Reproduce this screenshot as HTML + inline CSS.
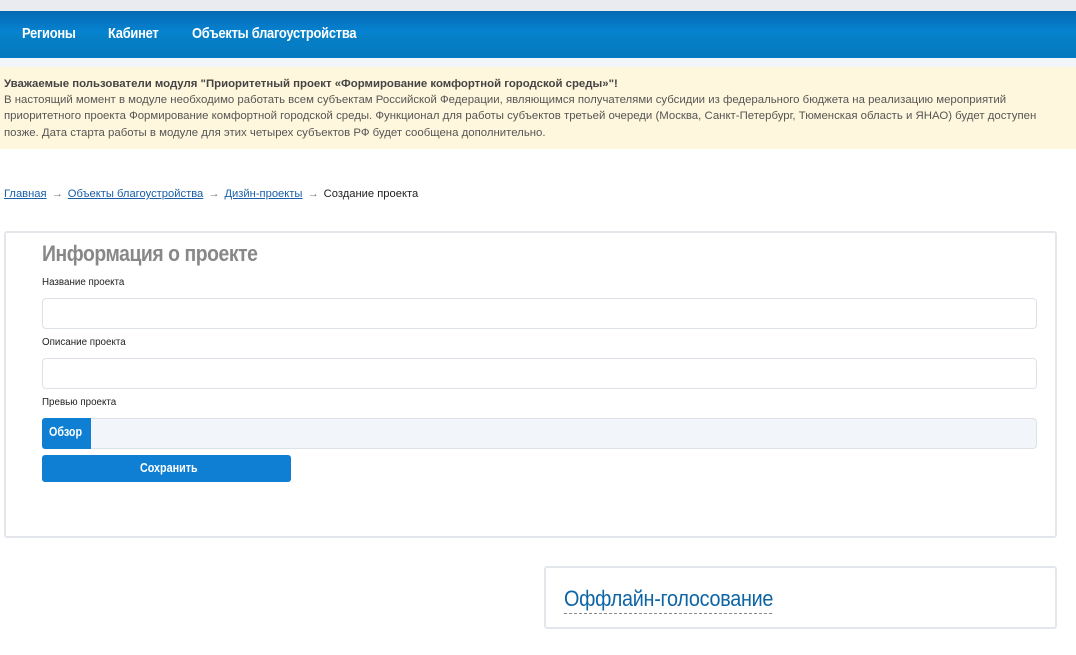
<!DOCTYPE html>
<html><head><meta charset="utf-8"><style>
*{margin:0;padding:0;box-sizing:border-box}
body{width:1076px;height:655px;overflow:hidden;background:#fff;font-family:"Liberation Sans",sans-serif;position:relative}
.sx{display:inline-block;transform:scaleX(0.86);transform-origin:0 0;white-space:nowrap}
.top{position:absolute;left:0;top:0;width:1076px;height:11px;background:#e9ebf0}
.nav{position:absolute;left:0;top:11px;width:1076px;height:47px;background:linear-gradient(#0569b3 0,#0684d2 22px,#0680c8 24px,#0679c0 47px)}
.nav span{position:absolute;top:14px;color:#fff;font-size:15px;font-weight:bold;letter-spacing:-0.3px}
.gap{position:absolute;left:0;top:58px;width:1076px;height:9px;background:#f2f5f9}
.notice{position:absolute;left:0;top:67px;width:1076px;height:82px;background:#fff7dd;padding:9px 4px;font-size:11.4px;line-height:16.2px;color:#555}
.notice b{color:#444}
.bc{position:absolute;left:4px;top:188px;font-size:11.2px;color:#222;white-space:nowrap}
.bc a{color:#1a5fa8;text-decoration:underline}
.bc .ar{color:#777;margin:0 5px}
.card{position:absolute;border:2px solid #e3e7ec;border-radius:3px;background:#fff}
.h{position:absolute;font-size:22px;color:#888;font-weight:bold;letter-spacing:-0.5px}
.lbl{position:absolute;left:42px;font-size:9.8px;color:#222}
.inp{position:absolute;left:42px;width:995px;height:31px;border:1px solid #dde2e8;border-radius:4px;background:#fff}
</style></head><body>
<div class="top"></div>
<div class="nav"><span style="left:22px" class="sx">Регионы</span><span style="left:108px" class="sx">Кабинет</span><span style="left:192px" class="sx">Объекты благоустройства</span></div>
<div class="gap"></div>
<div class="notice"><b>Уважаемые пользователи модуля "Приоритетный проект «Формирование комфортной городской среды»"!</b><br>В настоящий момент в модуле необходимо работать всем субъектам Российской Федерации, являющимся получателями субсидии из федерального бюджета на реализацию мероприятий<br>приоритетного проекта Формирование комфортной городской среды. Функционал для работы субъектов третьей очереди (Москва, Санкт-Петербург, Тюменская область и ЯНАО) будет доступен<br>позже. Дата старта работы в модуле для этих четырех субъектов РФ будет сообщена дополнительно.</div>
<div class="bc"><a>Главная</a><span class="ar">→</span><a>Объекты благоустройства</a><span class="ar">→</span><a>Дизйн-проекты</a><span class="ar">→</span>Создание проекта</div>
<div class="card" style="left:4px;top:231px;width:1053px;height:307px"></div>
<div class="h" style="left:42px;top:241px"><span class="sx" style="transform:scaleX(0.88)">Информация о проекте</span></div>
<div class="lbl" style="top:277px">Название проекта</div>
<div class="inp" style="top:298px"></div>
<div class="lbl" style="top:337px">Описание проекта</div>
<div class="inp" style="top:358px"></div>
<div class="lbl" style="top:397px">Превью проекта</div>
<div style="position:absolute;left:42px;top:418px;width:995px;height:31px;background:#f2f5fa;border:1px solid #dde2e8;border-radius:4px"></div>
<div style="position:absolute;left:42px;top:418px;width:49px;height:31px;background:#0f7fd4;color:#fff;font-size:12.5px;font-weight:bold;line-height:29px;padding-left:7px;border-radius:3px 0 0 3px"><span class="sx">Обзор</span></div>
<div style="position:absolute;left:42px;top:455px;width:249px;height:27px;background:#0f7fd4;color:#fff;font-size:12.5px;font-weight:bold;line-height:27px;padding-left:98px;border-radius:3px"><span class="sx">Сохранить</span></div>
<div class="card" style="left:544px;top:566px;width:513px;height:63px"></div>
<div style="position:absolute;left:564px;top:586px;width:208px;height:28px;border-bottom:1px dashed #888;overflow:visible"><span class="sx" style="font-size:22px;color:#0d65a5;letter-spacing:-0.3px;line-height:26px;transform:scaleX(0.9)">Оффлайн-голосование</span></div>
</body></html>
